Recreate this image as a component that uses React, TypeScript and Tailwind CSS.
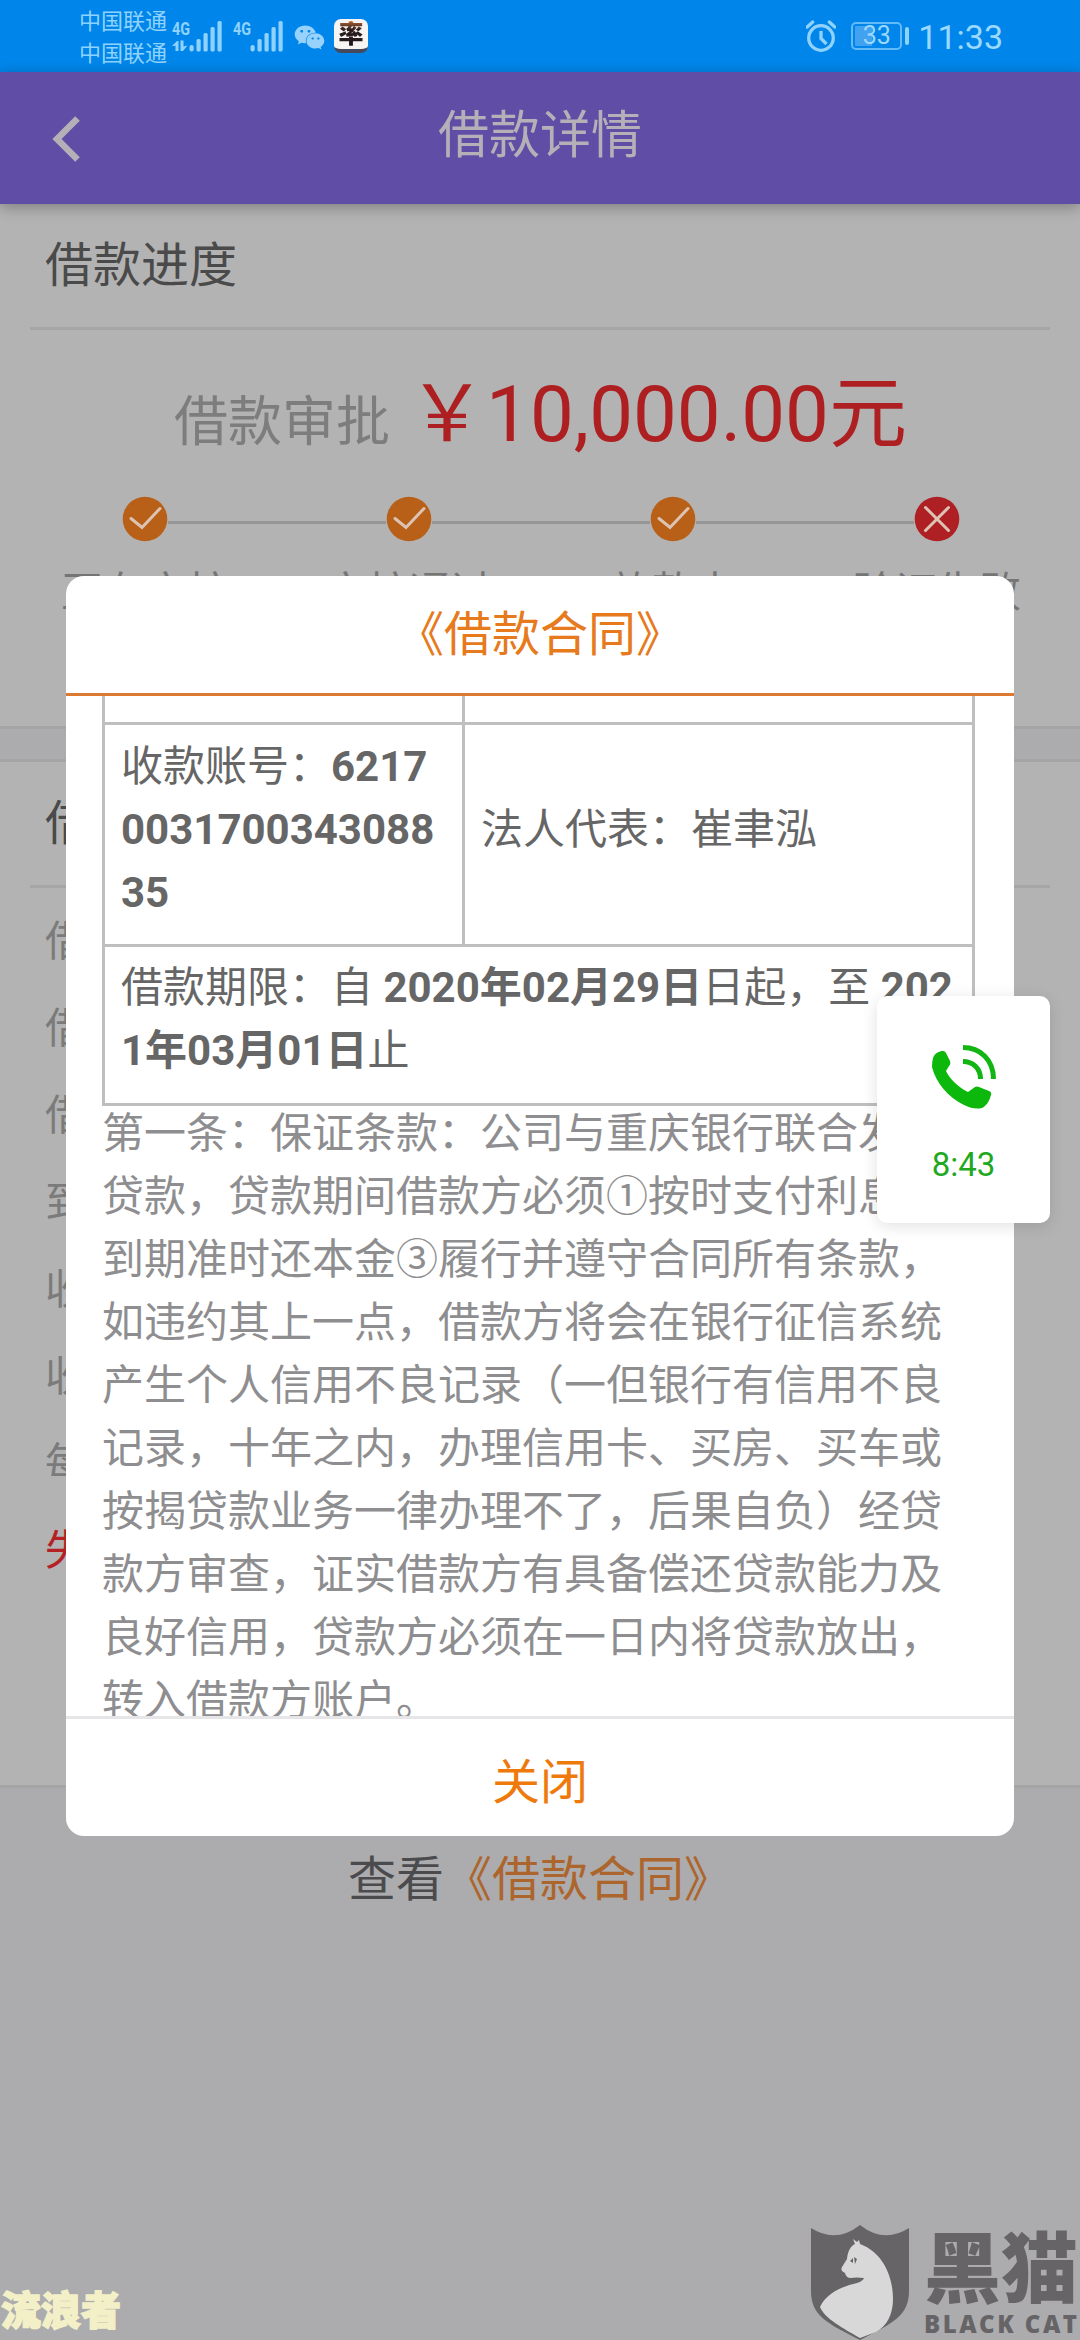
import React from "react";
import { FaWeixin } from "react-icons/fa";

const contractLines = [
  "第一条：保证条款：公司与重庆银行联合发放",
  "贷款，贷款期间借款方必须①按时支付利息②",
  "到期准时还本金③履行并遵守合同所有条款，",
  "如违约其上一点，借款方将会在银行征信系统",
  "产生个人信用不良记录（一但银行有信用不良",
  "记录，十年之内，办理信用卡、买房、买车或",
  "按揭贷款业务一律办理不了，后果自负）经贷",
  "款方审查，证实借款方有具备偿还贷款能力及",
  "良好信用，贷款方必须在一日内将贷款放出，",
  "转入借款方账户。",
];

const steps = [
  { label: "正在审核", ok: true },
  { label: "审核通过", ok: true },
  { label: "放款中", ok: true },
  { label: "验证失败", ok: false },
];

const details = [
  "借款金额",
  "借款期限",
  "借款时间",
  "到账金额",
  "收款银行",
  "收款账号",
  "每月还款",
];

export default function App() {
  return (
    <div className="relative flex h-[2340px] w-[1080px] flex-col overflow-hidden bg-[#acacae] font-['Roboto','Noto_Sans_CJK_SC',sans-serif]">
      <StatusBar />
      <Header />
      <Progress />
      <div className="h-[30px] shrink-0 bg-[#acacae]" />
      <Details />
      <p className="mt-[62px] text-center text-5xl leading-[60px] text-[#4b4b4d]">
        查看<span className="text-[#ac652c]">《借款合同》</span>
      </p>

      <ContractModal />
      <CallBubble />
      <Watermarks />
    </div>
  );
}

function Signal({ arrows }: { arrows?: boolean }) {
  return (
    <svg viewBox="0 0 50 32" className="h-8 w-[50px]" fill="#8fd2fd">
      <text
        x="0"
        y="14.5"
        fontSize="19"
        fontWeight="700"
        fontFamily="Roboto, sans-serif"
        textLength="18"
        lengthAdjust="spacingAndGlyphs"
      >
        4G
      </text>
      {arrows && (
        <path d="M0 26l5-5h1.500v10h-3v-5.500l-1 .5zM8.500 20.500h3v6l4-1-4.500 5.500h-2.500z" />
      )}
      <rect x="17.500" y="25" width="4.200" height="6.500" rx="2" />
      <rect x="24.500" y="19" width="4.200" height="12.500" rx="1.500" />
      <rect x="31.500" y="13" width="4.200" height="18.500" rx="1.500" />
      <rect x="38.500" y="7" width="4.200" height="24.500" rx="1.500" />
      <rect x="45.500" y="1" width="4.200" height="30.500" rx="1.500" />
    </svg>
  );
}

function StatusBar() {
  return (
    <div className="flex h-[72px] shrink-0 items-center justify-between bg-[#0086ea] pl-[79px] pr-[77px] text-[#8fd2fd]">
      <div className="flex items-center">
        <div className="pt-[3px] text-[22px] leading-[32px]">
          <div>中国联通</div>
          <div>中国联通</div>
        </div>
        <div className="ml-[5px] flex gap-[11px]">
          <Signal arrows />
          <Signal />
        </div>
        <FaWeixin className="ml-[11px] mt-[2px] size-[31px] text-[#96d2fc]" />
        {/* app notification */}
        <div className="ml-[9px] h-[34px] w-[34px] overflow-hidden rounded-[7px] border-b-4 border-[#45495c] bg-[#f7f5f4] text-center">
          <span className="block bg-gradient-to-b from-[#d9762c] via-[#2b1c1c] via-35% to-[#1d1620] bg-clip-text text-[25px] leading-[31px] font-black text-transparent">
            率
          </span>
        </div>
      </div>
      <div className="flex items-center">
        <svg viewBox="0 0 30 34" className="h-[34px] w-[30px]" fill="none" stroke="#8fd2fd">
          <circle cx="15" cy="19" r="12.300" strokeWidth="3.300" />
          <path d="M15 12v7.500l5.500 5.500" strokeWidth="3.300" />
          <path d="M1.200 8l5.500-5M28.800 8l-5.500-5" strokeWidth="3.300" strokeLinecap="round" />
        </svg>
        <div className="ml-[15px] flex h-7 w-[51px] items-center justify-center rounded-[5px] border-2 border-[#62baf8] bg-linear-to-r from-[#43a2f0] from-40% to-transparent to-40% bg-clip-content p-[2px] text-[25px] leading-6 text-[#9bd9ff]">
          33
        </div>
        <div className="ml-[3px] h-[18px] w-1 rounded-sm bg-[#8fd2fd]" />
        <span className="ml-[9px] pt-[2px] text-[34px] leading-9 text-[#9bd9ff]">11:33</span>
      </div>
    </div>
  );
}

function Header() {
  return (
    <div className="relative z-0 grid h-[132px] shrink-0 grid-cols-[80px_1fr_80px] items-center bg-[#604ea6] text-[#b3b0b8] shadow-[0_3px_14px_rgba(0,0,0,.3)]">
      <svg viewBox="0 0 28 46" className="mt-[2px] ml-[52px] h-[46px] w-7" fill="none" stroke="currentColor" strokeWidth="6.500">
        <path d="M25.500 2.500L5 23l20.500 20.500" />
      </svg>
      <h1 className="pb-[5px] text-center text-[51px] leading-[60px]">借款详情</h1>
    </div>
  );
}

function StepDot({ ok }: { ok: boolean }) {
  return (
    <svg viewBox="0 0 46 46" className="z-10 size-[46px]" fill="none" stroke="#dcc3b4" strokeWidth="3" strokeLinecap="round">
      <circle cx="23" cy="23" r="22.300" fill={ok ? "#b86017" : "#ae2023"} stroke="none" />
      <path d={ok ? "M9 22.500l11 9 18-19" : "M11.500 11.500l23 23M34.500 11.500l-23 23"} />
    </svg>
  );
}

function Progress() {
  return (
    <section className="h-[525px] shrink-0 border-b-3 border-[#a5a5a6] bg-[#b3b3b3]">
      <h2 className="mx-[30px] h-[126px] border-b-3 border-[#a6a6a6] pl-[15px] text-5xl leading-[123px] text-[#4a4a4a]">
        借款进度
      </h2>
      <div className="flex h-[166px] items-baseline justify-center gap-[18px] pt-[35px] pl-px whitespace-nowrap">
        <span className="text-[54px] text-[#7d7d7d]">借款审批</span>
        <span className="text-[78px] leading-[100px] text-[#ae1f22]">￥10,000.00元</span>
      </div>
      <div className="grid grid-cols-4 pr-[11px] pl-[13px]">
        {steps.map((step, i) => (
          <div key={step.label} className="flex flex-col items-center">
            <div className="flex w-full items-center">
              <span className={i === 0 ? "h-[3px] flex-1" : "mt-[6px] h-[3px] flex-1 bg-[#969696]"} />
              <StepDot ok={step.ok} />
              <span className={i === 3 ? "h-[3px] flex-1" : "mt-[6px] h-[3px] flex-1 bg-[#969696]"} />
            </div>
            <span className="mt-[21px] text-[42px] leading-[60px] text-[#757575]">{step.label}</span>
          </div>
        ))}
      </div>
    </section>
  );
}

function Details() {
  return (
    <section className="h-[1029px] shrink-0 border-y-3 border-[#a5a5a6] bg-[#b3b3b3]">
      <h2 className="mx-[30px] h-[126px] border-b-3 border-[#a6a6a6] pl-[15px] text-5xl leading-[123px] text-[#4a4a4a]">
        借款信息
      </h2>
      <ul className="mt-[10px] pl-[45px] text-[42px] leading-[87px] text-[#7b7b7b]">
        {details.map((item) => (
          <li key={item}>{item}</li>
        ))}
        <li className="text-[#b52226]">失败原因</li>
      </ul>
    </section>
  );
}

function ContractModal() {
  return (
    <div className="absolute top-[576px] left-[66px] flex h-[1260px] w-[948px] flex-col overflow-hidden rounded-[18px] bg-white">
      <div className="h-[120px] shrink-0 border-b-3 border-[#dc7932] text-center text-5xl leading-[117px] text-[#e67a1c]">
        《借款合同》
      </div>
      <div className="h-[1020px] overflow-hidden pr-[39px] pl-[36px] text-[42px] leading-[63px]">
        <table className="w-full table-fixed border-collapse text-[#666]">
          <colgroup>
            <col className="w-[360px]" />
            <col />
          </colgroup>
          <tbody>
            <tr className="h-[27px]">
              <td className="border-3 border-t-0 border-[#bfbfbf]" />
              <td className="border-3 border-t-0 border-[#bfbfbf]" />
            </tr>
            <tr>
              <td className="border-3 border-[#bfbfbf] px-[16px] pt-[10px] pb-[20px] break-all">
                收款账号：<b>6217003170034308835</b>
              </td>
              <td className="border-3 border-[#bfbfbf] px-[16px] pt-[10px] pb-[20px]">
                法人代表：崔聿泓
              </td>
            </tr>
            <tr>
              <td colSpan={2} className="border-3 border-[#bfbfbf] px-[16px] pt-[9px] pb-[21px] break-all">
                借款期限：自 <b>2020年02月29日</b>日起，至 <b>2021年03月01日</b>止
              </td>
            </tr>
          </tbody>
        </table>
        <div className="-mt-[4px] whitespace-nowrap text-[#8e8e90]">
          {contractLines.map((line) => (
            <p key={line}>{line}</p>
          ))}
        </div>
      </div>
      <button className="flex-1 border-t-3 border-[#e6e6e8] pt-[10px] text-5xl leading-[60px] text-[#ee7a0c]">
        关闭
      </button>
    </div>
  );
}

function CallBubble() {
  return (
    <div className="absolute top-[996px] left-[877px] flex h-[227px] w-[173px] flex-col items-center rounded-[10px] bg-white pt-[49px] shadow-[0_3px_16px_rgba(0,0,0,.12)]">
      <svg viewBox="0 0 64 64" className="size-16" fill="#0bb80b">
        <path d="M1 13C3 8 7 6 11 6q2 0 3 2l4 8q1 3-1 5l-3 5c3 7 13 17 22 21l7-5q2-1 4 0l10 4q3 1 2 4c-2 7-5 11-9 13q-8 2-18-3C16 52 4 38 0 22q0-5 1-9z" />
        <g fill="none" stroke="#12b512" strokeWidth="5">
          <path d="M31 2.500c17 0 30.500 12 30.500 31.500" />
          <path d="M31 16.500c10 0 17.500 7 17.500 17.500" />
        </g>
      </svg>
      <span className="mt-[36px] text-[33px] leading-10 text-[#22a81f]">8:43</span>
    </div>
  );
}

function Watermarks() {
  return (
    <div className="absolute inset-x-0 bottom-0 flex h-[115px] items-end justify-between">
      <span className="ml-[1px] text-[40px] leading-[56px] font-black text-[#f3f0c8] [-webkit-text-stroke:1.5px_#f3f0c8]">
        流浪者
      </span>
      <div className="flex text-[#666467]">
        <svg viewBox="0 0 98 115" className="h-[115px] w-[98px]">
          <path d="M0 3q25 16 49-3 24 19 49 3v63c0 25-16 32-49 49C16 98 0 91 0 66z" fill="#666467" />
          <path
            d="M42 14l4 3 2-2 1 4c22 8 33 31 33 55 0 15-6 27-17 33l-16 6C32 103 14 94 9 82c7-15 24-21 37-24q6-2 7-5-8-1-13 0-5 0-6-5-5-2-3-6l5-8c1-9 4-13 8-15z"
            fill="#d8d8d9"
          />
          <path d="M39 36l3-3v5zM43 32l3 2-2 5z" fill="#666467" />
        </svg>
        <div className="ml-[15px] w-[156px] pt-[8px]">
          <div className="text-[77px] leading-[76px] font-black">黑猫</div>
          <div className="mt-[2px] font-['Open_Sans',sans-serif] text-[24px] leading-[26px] font-extrabold tracking-[2.5px] whitespace-nowrap">
            BLACK CAT
          </div>
        </div>
      </div>
    </div>
  );
}
